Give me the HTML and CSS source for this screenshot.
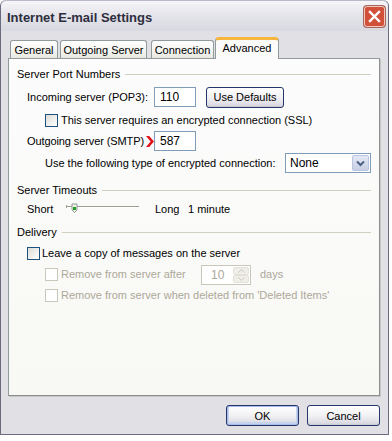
FILE: index.html
```html
<!DOCTYPE html>
<html>
<head>
<meta charset="utf-8">
<link rel="stylesheet" href="styles.css">
</head>
<body>
<div class="window">
  <div class="titlebar">
    <span class="title">Internet E-mail Settings</span>
    <div class="close">
      <svg width="13" height="13" viewBox="0 0 13 13"><path d="M2 2 L11 11 M11 2 L2 11" stroke="#ffffff" stroke-width="2.4" stroke-linecap="square"/></svg>
    </div>
  </div>
  <div class="content">
    <div class="tabs">
      <div class="tab t-general">General</div>
      <div class="tab t-out">Outgoing Server</div>
      <div class="tab t-conn">Connection</div>
      <div class="tab active">Advanced</div>
    </div>
    <div class="panel">
      <div class="group-head"><span>Server Port Numbers</span></div>
      <div class="row r-in">
        <span class="label">Incoming server (POP3):</span>
        <span class="input">110</span>
        <span class="btn b-def">Use Defaults</span>
      </div>
      <div class="row r-ssl">
        <span class="cb"></span><span>This server requires an encrypted connection (SSL)</span>
      </div>
      <div class="row r-out">
        <span class="label"><span class="out-text">Outgoing server (SMTP)</span><svg class="arrow" width="8" height="11" viewBox="0 0 8 11"><polygon points="0,0 3.2,0 8,5.5 3.2,11 0,11 4.6,5.5" fill="#e2141b"/></svg></span>
        <span class="input">587</span>
      </div>
      <div class="row r-enc">
        <span class="enc-label">Use the following type of encrypted connection:</span>
        <span class="select"><span class="sel-text">None</span><span class="sel-btn"><svg width="9" height="7" viewBox="0 0 9 7"><path d="M1 1.5 L4.5 5 L8 1.5" stroke="#4d6185" stroke-width="2" fill="none"/></svg></span></span>
      </div>
      <div class="group-head g-time"><span>Server Timeouts</span></div>
      <div class="row r-short">
        <span class="short">Short</span>
        <svg class="slider" width="74" height="12" viewBox="0 0 74 12"><rect x="0" y="4" width="73" height="1" fill="#9d9d92"/><rect x="0" y="5" width="73" height="1" fill="#fff"/><rect x="0" y="3" width="1" height="3" fill="#9d9d92"/><path d="M6 2 H11 V8 L8.5 10.5 L6 8 Z" fill="#f3f3ee" stroke="#8e9a8e" stroke-width="1"/><rect x="7" y="5" width="3" height="3" fill="#21a121"/></svg>
        <span class="long">Long</span>
        <span class="minute">1 minute</span>
      </div>
      <div class="group-head g-del"><span>Delivery</span></div>
      <div class="row r-leave">
        <span class="cb"></span><span>Leave a copy of messages on the server</span>
      </div>
      <div class="row r-remove dis">
        <span class="cb cb-dis"></span><span class="rm-text">Remove from server after</span>
        <span class="spin"><span class="spin-val">10</span><span class="spin-btns"><span class="sb"><svg width="7" height="4" viewBox="0 0 7 4"><path d="M0.5 3.5 L3.5 0.5 L6.5 3.5" stroke="#c9c7ba" fill="none"/></svg></span><span class="sb"><svg width="7" height="4" viewBox="0 0 7 4"><path d="M0.5 0.5 L3.5 3.5 L6.5 0.5" stroke="#c9c7ba" fill="none"/></svg></span></span></span>
        <span class="days">days</span>
      </div>
      <div class="row r-remove2 dis">
        <span class="cb cb-dis"></span><span>Remove from server when deleted from 'Deleted Items'</span>
      </div>
    </div>
    <div class="footer">
      <span class="btn b-ok">OK</span>
      <span class="btn b-cancel">Cancel</span>
    </div>
  </div>
</div>
</body>
</html>
```
FILE: styles.css
```css
html, body {
  margin: 0;
  padding: 0;
  background: #ffffff;
}
body {
  font-family: "Liberation Sans", Arial, sans-serif;
  font-size: 11px;
  color: #000;
  width: 392px;
  height: 441px;
  overflow: hidden;
  white-space: nowrap;
}
.window {
  box-sizing: border-box;
  width: 389px;
  height: 435px;
  background: #e1e0e5;
  border: 1px solid #6b6b80;
  border-top: none;
  border-radius: 6px 6px 0 0;
  display: flex;
  flex-direction: column;
}
.titlebar {
  height: 30px;
  flex: none;
  display: flex;
  align-items: center;
  justify-content: space-between;
  padding: 0 3px 0 6px;
  border-radius: 6px 6px 0 0;
  background: linear-gradient(#f6f6f9 0%, #e6e6ec 40%, #d8d8e0 100%);
  border-top: 1px solid #b8b8c6;
}
.title {
  font-weight: bold;
  font-size: 13px;
  color: #2e2e3e;
  margin-top: 2px;
}
.close {
  box-sizing: border-box;
  width: 21px;
  height: 21px;
  margin-top: 1px;
  border: 1px solid #f0c8be;
  border-radius: 3px;
  background: #d2503a;
  box-shadow: 0 0 0 1px #a8655a;
  display: flex;
  align-items: center;
  justify-content: center;
}
.close svg {
  display: block;
}
.content {
  flex: 1;
  display: flex;
  flex-direction: column;
  padding: 6px 8px 0 7px;
}
.tabs {
  height: 21px;
  display: flex;
  align-items: flex-end;
  padding-left: 2px;
  gap: 2px;
  position: relative;
  z-index: 2;
}
.tab {
  box-sizing: border-box;
  height: 18px;
  border: 1px solid #919b9c;
  border-bottom: none;
  border-radius: 3px 3px 0 0;
  background: linear-gradient(#ffffff, #f3f3f0 60%, #e8e7e1);
  display: flex;
  align-items: center;
  justify-content: center;
  padding-top: 1px;
}
.t-general { width: 48px; }
.t-out { width: 87px; }
.t-conn { width: 63px; margin-left: 2px; }
.tab.active {
  width: 64px;
  height: 22px;
  margin-bottom: -1px;
  margin-left: -1px;
  background: #fbfbfa;
  border-top: 3px solid #f7b53d;
  padding-top: 0;
  padding-bottom: 3px;
  border-radius: 4px 4px 0 0;
}
.panel {
  box-sizing: border-box;
  height: 338px;
  border: 1px solid #919b9c;
  border-right-color: #8a8f90;
  border-bottom-color: #8a8f90;
  box-shadow: 1px 1px 0 #c8c6c0;
  background: linear-gradient(#fcfcfd, #f8f8f4);
  padding: 8px 8px 0 8px;
  display: flex;
  flex-direction: column;
}
.group-head {
  height: 14px;
  display: flex;
  align-items: center;
}
.group-head::after {
  content: "";
  flex: 1;
  height: 1px;
  background: #d0d0bf;
  margin-left: 5px;
  margin-top: 1px;
}
.row {
  display: flex;
  align-items: center;
}
.r-in {
  height: 20px;
  margin-top: 6px;
  padding-left: 10px;
}
.label {
  width: 127px;
  flex: none;
  display: flex;
  align-items: center;
}
.out-text {
  letter-spacing: -0.1px;
}
.arrow {
  margin-left: 2px;
}
.input {
  box-sizing: border-box;
  width: 42px;
  height: 20px;
  border: 1px solid #7f9db9;
  background: #fff;
  font-size: 12px;
  display: flex;
  align-items: center;
  padding-left: 5px;
}
.btn {
  box-sizing: border-box;
  height: 21px;
  border: 1px solid #25366a;
  border-radius: 3px;
  background: linear-gradient(#ffffff 0%, #f1f1f4 50%, #dcdbe4 90%, #c8c7d2 100%);
  display: flex;
  align-items: center;
  justify-content: center;
}
.b-def {
  width: 78px;
  margin-left: 10px;
}
.r-ssl {
  height: 14px;
  margin-top: 6px;
  padding-left: 28px;
}
.cb {
  box-sizing: border-box;
  width: 13px;
  height: 13px;
  border: 1px solid #1c5180;
  background: linear-gradient(135deg, #dcdcd7, #ffffff);
  margin-right: 3px;
  flex: none;
}
.cb-dis {
  border-color: #cac8bb;
  background: #fff;
}
.r-out {
  height: 20px;
  margin-top: 4px;
  padding-left: 10px;
}
.r-enc {
  height: 20px;
  margin-top: 2px;
  padding-left: 28px;
}
.enc-label {
  width: 240px;
  flex: none;
}
.select {
  box-sizing: border-box;
  width: 86px;
  height: 20px;
  border: 1px solid #7f9db9;
  background: #fff;
  display: flex;
  align-items: center;
  justify-content: space-between;
  padding: 1px;
}
.sel-text {
  padding-left: 3px;
  font-size: 12px;
}
.sel-btn {
  box-sizing: border-box;
  width: 17px;
  height: 16px;
  border: 1px solid #b8c4e0;
  border-radius: 2px;
  background: linear-gradient(#e4e8f4, #c8cfe4);
  display: flex;
  align-items: center;
  justify-content: center;
}
.g-time {
  margin-top: 10px;
}
.r-short {
  height: 14px;
  margin-top: 5px;
  padding-left: 10px;
}
.short {
  width: 39px;
}
.slider {
  margin-top: -2px;
}
.long {
  margin-left: 15px;
  width: 33px;
}
.g-del {
  margin-top: 9px;
}
.r-leave {
  height: 14px;
  margin-top: 7px;
  padding-left: 10px;
}
.r-leave .cb {
  margin-right: 2px;
}
.dis {
  color: #aca899;
}
.r-remove {
  height: 20px;
  margin-top: 4px;
  padding-left: 28px;
}
.rm-text {
  width: 140px;
}
.spin {
  box-sizing: border-box;
  width: 50px;
  height: 20px;
  border: 1px solid #c9c7ba;
  background: #fff;
  display: flex;
  align-items: center;
  justify-content: space-between;
  padding: 1px;
  margin-top: 2px;
}
.spin-val {
  padding-left: 8px;
  font-size: 12px;
}
.spin-btns {
  width: 16px;
  height: 16px;
  display: flex;
  flex-direction: column;
}
.sb {
  box-sizing: border-box;
  flex: 1;
  background: #efeee8;
  border: 1px solid #e4e2d8;
  border-radius: 2px;
  display: flex;
  align-items: center;
  justify-content: center;
}
.days {
  margin-left: 9px;
}
.r-remove2 {
  height: 14px;
  margin-top: 4px;
  padding-left: 28px;
}
.footer {
  display: flex;
  justify-content: flex-end;
  gap: 8px;
  margin-top: 9px;
}
.b-ok, .b-cancel {
  width: 73px;
}
.b-ok {
  box-shadow: inset 0 0 0 1px #a9bde6, inset 0 -1px 0 2px #c5d3ef;
}
```
